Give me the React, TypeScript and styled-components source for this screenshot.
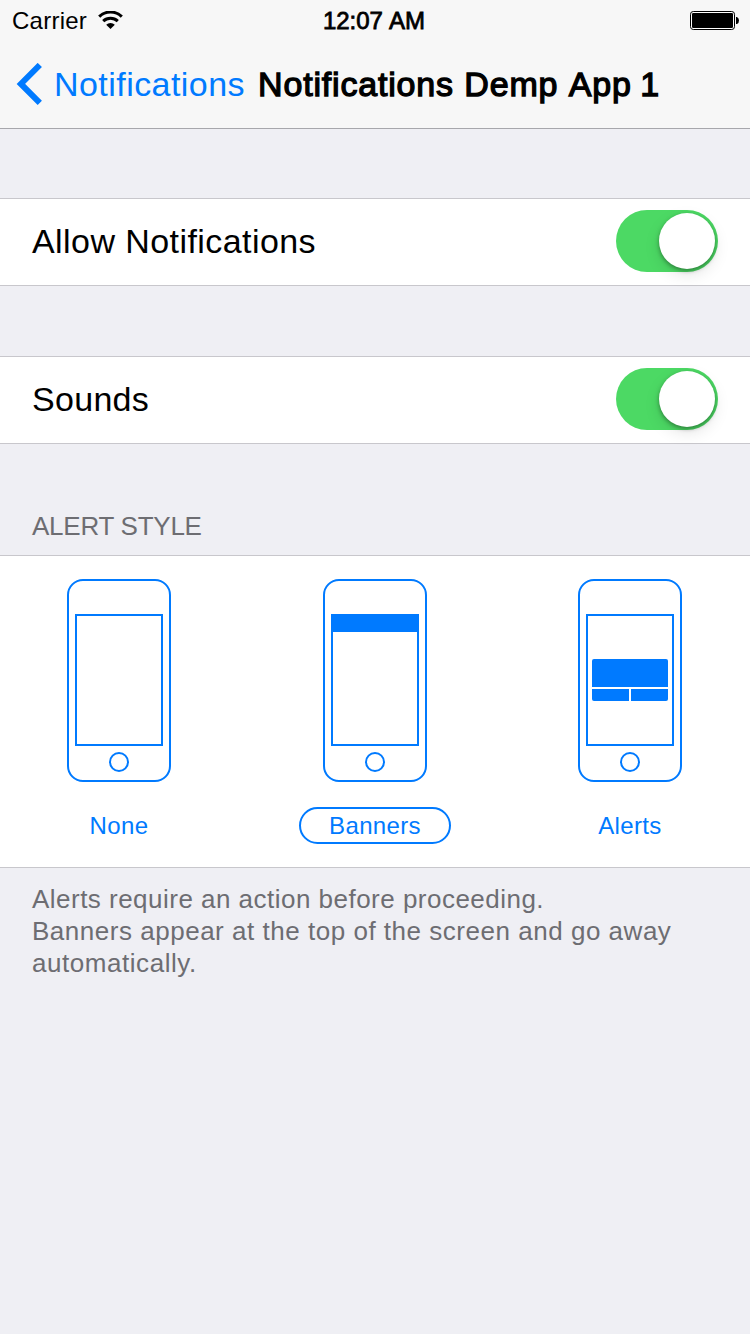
import React, { useState } from "react";
import styled, { createGlobalStyle } from "styled-components";

const BLUE = "#007aff";

const GlobalStyle = createGlobalStyle`
  * { box-sizing: border-box; }
  body {
    margin: 0;
    background: #efeff4;
    font-family: "Liberation Sans", Arial, sans-serif;
    color: #000;
  }
`;

const Screen = styled.div`
  width: 750px;
  height: 1334px;
  overflow: hidden;
  background: #efeff4;
`;

const Header = styled.header`
  height: 129px;
  background: #f7f7f7;
  border-bottom: 1px solid #a7a7ac;
`;

const StatusBar = styled.div`
  display: grid;
  grid-template-columns: 1fr auto 1fr;
  align-items: center;
  height: 40px;
  padding: 2px 10px 0 12px;
  font-size: 24px;
  line-height: 28px;
`;

const CarrierGroup = styled.div`
  display: flex;
  align-items: center;
  gap: 11px;
  letter-spacing: 0.25px;
`;

const Clock = styled.div`
  margin-right: 4px;
  letter-spacing: -0.05px;
  word-spacing: 1px;
  -webkit-text-stroke: 0.8px #000;
`;

const BatteryIcon = styled.svg`
  justify-self: end;
  margin-top: -1px;
`;

const WifiIcon = styled.svg`
  margin-top: -2px;
`;

const NavBar = styled.nav`
  display: flex;
  align-items: center;
  height: 88px;
  padding-left: 16px;
  font-size: 34px;
  line-height: 40px;
`;

const BackButton = styled.button`
  display: flex;
  align-items: center;
  gap: 11px;
  padding: 0;
  border: 0;
  background: none;
  font: inherit;
  letter-spacing: 0.45px;
  color: ${BLUE};
`;

const Title = styled.h1`
  margin: 0 0 0 13px;
  font-size: 34px;
  font-weight: 400;
  letter-spacing: 0.82px;
  word-spacing: 0.2px;
  font-kerning: none;
  white-space: nowrap;
  -webkit-text-stroke: 1.3px #000;
`;

const TitleNumber = styled.span`
  margin-left: -2px;
`;

const SettingRow = styled.div<{ $top: number }>`
  display: flex;
  align-items: center;
  justify-content: space-between;
  height: 88px;
  margin-top: ${(p) => p.$top}px;
  padding: 0 32px 2px;
  background: #fff;
  border: solid #c8c7cc;
  border-width: 1px 0;
`;

const SettingLabel = styled.span<{ $tracking: number }>`
  font-size: 34px;
  line-height: 40px;
  letter-spacing: ${(p) => p.$tracking}px;
`;

const Track = styled.button<{ $on: boolean }>`
  display: flex;
  justify-content: ${(p) => (p.$on ? "flex-end" : "flex-start")};
  width: 102px;
  height: 62px;
  padding: 3px;
  border: 0;
  border-radius: 31px;
  background: ${(p) => (p.$on ? "#4cd964" : "#e5e5e5")};
`;

const Knob = styled.span`
  width: 56px;
  height: 56px;
  border-radius: 50%;
  background: #fff;
  box-shadow: 0 6px 16px rgba(0, 0, 0, 0.1), 0 2px 4px rgba(0, 0, 0, 0.35);
`;

const SectionTitle = styled.h2`
  height: 111px;
  margin: 0;
  padding: 67px 32px 0;
  font-size: 26px;
  font-weight: 400;
  line-height: 30px;
  letter-spacing: -0.25px;
  color: #6d6d72;
`;

const StylePanel = styled.div`
  display: flex;
  justify-content: space-between;
  height: 313px;
  padding: 23px 44px 0 43px;
  background: #fff;
  border: solid #c8c7cc;
  border-width: 1px 0;
`;

const StyleOption = styled.button`
  display: flex;
  flex-direction: column;
  align-items: center;
  gap: 25px;
  width: 152px;
  height: 265px;
  padding: 0;
  border: 0;
  background: none;
  font: inherit;
  color: ${BLUE};

  &:nth-child(2) {
    margin-left: 1px;
  }
`;

const OptionLabel = styled.span<{ $selected: boolean; $tracking: number }>`
  width: 152px;
  height: 37px;
  border: 2px solid ${(p) => (p.$selected ? BLUE : "transparent")};
  border-radius: 19px;
  font-size: 24px;
  line-height: 34px;
  letter-spacing: ${(p) => p.$tracking}px;
  text-align: center;
`;

const Footnote = styled.p`
  margin: 0;
  padding: 15px 32px 0;
  font-size: 26px;
  line-height: 32px;
  color: #6d6d72;
`;

const FootnoteLine = styled.span<{ $tracking: number }>`
  display: block;
  white-space: nowrap;
  letter-spacing: ${(p) => p.$tracking}px;
`;

type AlertKind = "None" | "Banners" | "Alerts";

function PhoneDrawing({ kind }: { kind: AlertKind }) {
  return (
    <svg width="104" height="203" viewBox="0 0 104 203" fill="none" stroke={BLUE} strokeWidth="2">
      <rect x="1" y="1" width="102" height="201" rx="15" />
      <rect x="9" y="36" width="86" height="130" />
      <circle cx="52" cy="183" r="9" />
      {kind === "Banners" && <rect x="8" y="35" width="88" height="18" fill={BLUE} stroke="none" />}
      {kind === "Alerts" && (
        <g fill={BLUE} stroke="none">
          <path d="M14 108V82a2 2 0 0 1 2-2h72a2 2 0 0 1 2 2v26z" />
          <path d="M14 110h37v12H16a2 2 0 0 1-2-2z" />
          <path d="M53 110h37v10a2 2 0 0 1-2 2H53z" />
        </g>
      )}
    </svg>
  );
}

function Toggle({ label }: { label: string }) {
  const [on, setOn] = useState(true);
  return (
    <Track $on={on} role="switch" aria-checked={on} aria-label={label} onClick={() => setOn(!on)}>
      <Knob />
    </Track>
  );
}

const OPTIONS: { kind: AlertKind; tracking: number }[] = [
  { kind: "None", tracking: 0.4 },
  { kind: "Banners", tracking: 0.35 },
  { kind: "Alerts", tracking: 0.35 },
];

export default function App() {
  const [selected, setSelected] = useState<AlertKind>("Banners");
  return (
    <>
      <GlobalStyle />
      <Screen>
        <Header>
          <StatusBar>
            <CarrierGroup>
              Carrier
              <WifiIcon width="25" height="18" viewBox="0 0 25 18" fill="none" stroke="#000">
                <path d="M1.2 5.6a16.2 16.2 0 0 1 22.6 0" strokeWidth="3" />
                <path d="M5.2 10.2a10.6 10.6 0 0 1 14.6 0" strokeWidth="3" />
                <path d="M8.2 13.8a6.2 6.2 0 0 1 8.6 0L12.5 18z" fill="#000" stroke="none" />
              </WifiIcon>
            </CarrierGroup>
            <Clock>12:07 AM</Clock>
            <BatteryIcon width="50" height="20" viewBox="0 0 50 20">
              <rect x="0.5" y="0.5" width="44" height="18" rx="2.8" fill="#fff" stroke="#000" />
              <rect x="2" y="2" width="41" height="15" rx="1.2" />
              <path d="M46 6h1q2 1 2 3.5T47 13h-1z" />
            </BatteryIcon>
          </StatusBar>
          <NavBar>
            <BackButton>
              <svg width="27" height="42" viewBox="0 0 27 42" fill="none" stroke={BLUE} strokeWidth="6">
                <path d="M23.8 2L4.9 20.9L23.8 39.8" />
              </svg>
              Notifications
            </BackButton>
            <Title>
              Notifications Demp App <TitleNumber>1</TitleNumber>
            </Title>
          </NavBar>
        </Header>
        <SettingRow $top={69}>
          <SettingLabel $tracking={0.43}>Allow Notifications</SettingLabel>
          <Toggle label="Allow Notifications" />
        </SettingRow>
        <SettingRow $top={70}>
          <SettingLabel $tracking={0.3}>Sounds</SettingLabel>
          <Toggle label="Sounds" />
        </SettingRow>
        <SectionTitle>ALERT STYLE</SectionTitle>
        <StylePanel>
          {OPTIONS.map((o) => (
            <StyleOption key={o.kind} onClick={() => setSelected(o.kind)}>
              <PhoneDrawing kind={o.kind} />
              <OptionLabel $selected={selected === o.kind} $tracking={o.tracking}>
                {o.kind}
              </OptionLabel>
            </StyleOption>
          ))}
        </StylePanel>
        <Footnote>
          <FootnoteLine $tracking={0.48}>Alerts require an action before proceeding.</FootnoteLine>
          <FootnoteLine $tracking={0.52}>Banners appear at the top of the screen and go away</FootnoteLine>
          <FootnoteLine $tracking={0.55}>automatically.</FootnoteLine>
        </Footnote>
      </Screen>
    </>
  );
}
